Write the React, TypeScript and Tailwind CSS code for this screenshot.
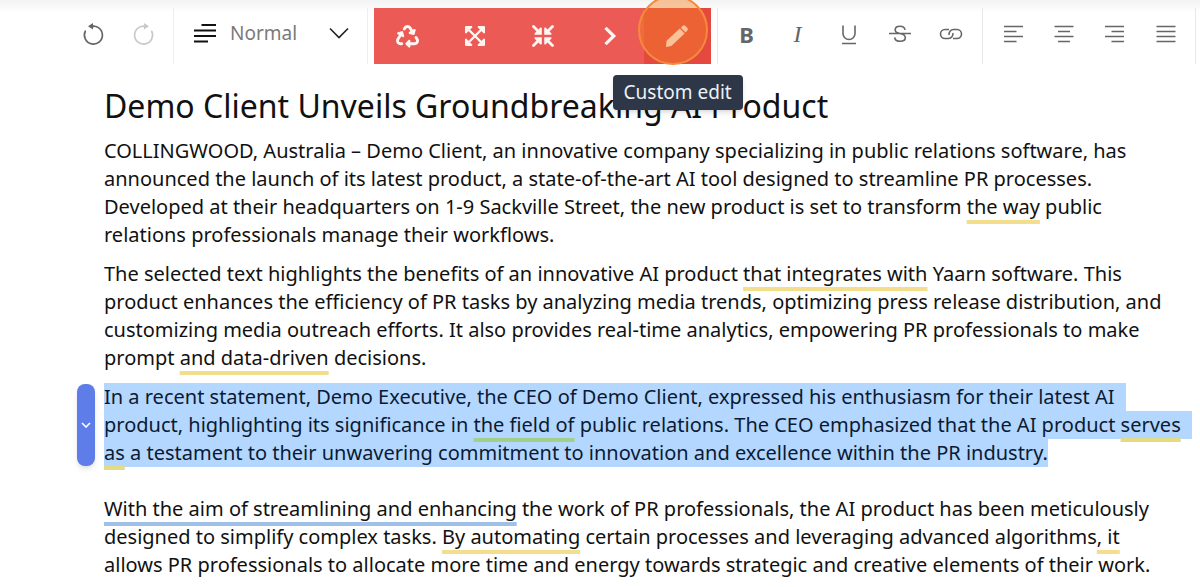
import type { ReactNode } from "react";
import { FaRecycle } from "react-icons/fa6";

function ToolButton({ label, children, faded = false }: { label: string; children: ReactNode; faded?: boolean }) {
  return (
    <button
      type="button"
      aria-label={label}
      disabled={faded}
      className={`flex h-14 w-[51px] items-center justify-center pb-1 ${faded ? "text-[#c9c9c9]" : "text-[#666]"}`}
    >
      {children}
    </button>
  );
}

function AiButton({ label, children }: { label: string; children: ReactNode }) {
  return (
    <button type="button" aria-label={label} className="flex h-14 flex-1 items-center justify-center">
      {children}
    </button>
  );
}

function RotateIcon() {
  return (
    <svg viewBox="0 0 24 24" className="size-6" fill="none" stroke="currentColor" strokeWidth="1.7">
      <path d="M9.500 4.600A9 9 0 1 1 4.300 9.200" strokeLinecap="round" />
      <path d="M12 1v6.600L7 4.300z" fill="currentColor" stroke="none" />
      <path d="M11 4.300h2" />
    </svg>
  );
}

function ExpandIcon() {
  return (
    <svg viewBox="0 0 20 20" className="size-5" fill="currentColor">
      <path d="M4 4L16 16M16 4L4 16" stroke="currentColor" strokeWidth="2.4" />
      <path d="M0 1a1 1 0 0 1 1-1H7L7.400 1.200L1.200 7.400L0 7zM20 1a1 1 0 0 0-1-1H13L12.600 1.200L18.800 7.400L20 7zM0 19a1 1 0 0 0 1 1H7L7.400 18.800L1.200 12.600L0 13zM20 19a1 1 0 0 1-1 1H13L12.600 18.800L18.800 12.600L20 13z" />
    </svg>
  );
}

function ShortenIcon() {
  return (
    <svg viewBox="0 0 22 22" className="size-[22px]" fill="currentColor">
      <path d="M1.500 1.500L7 7M20.500 1.500L15 7M1.500 20.500L7 15M20.500 20.500L15 15" stroke="currentColor" strokeWidth="2.800" strokeLinecap="round" />
      <path d="M9.800 2.800V9.800H2.600L2.500 8.400L8.400 2.500zM12.200 2.800V9.800H19.400L19.500 8.400L13.600 2.500zM9.800 19.200V12.200H2.600L2.500 13.600L8.400 19.500zM12.200 19.200V12.200H19.400L19.500 13.600L13.600 19.500z" />
    </svg>
  );
}

function PencilIcon() {
  return (
    <svg viewBox="0 0 24 24" className="size-6" fill="currentColor">
      <path d="M1 22.600L1.600 16.800L14.800 4.600L19.600 9.400L6.600 21.800L1.400 23z" />
      <path d="M15.800 3.700L17.600 1.900Q19 0.600 20.400 1.900L22.400 3.900Q23.600 5.300 22.300 6.600L20.600 8.400z" />
    </svg>
  );
}

function Lines({ d }: { d: string }) {
  return (
    <svg viewBox="0 0 20 20" className="size-5" fill="none" stroke="currentColor" strokeWidth="1.6">
      <path d={d} />
    </svg>
  );
}

function Hint({ tone = "yellow", children }: { tone?: "yellow" | "blue" | "green" | "olive"; children: ReactNode }) {
  const tones = {
    yellow: "decoration-[#f3de8d]",
    blue: "decoration-[#9fc0e8]",
    green: "decoration-[#a3cf8c]",
    olive: "decoration-[#e3db85]",
  };
  return (
    <span className={`underline decoration-4 underline-offset-[6px] [text-decoration-skip-ink:none] ${tones[tone]}`}>
      {children}
    </span>
  );
}

function Line({ children }: { children: ReactNode }) {
  return <span className="block whitespace-nowrap">{children}</span>;
}

function Selected({ children, open = false }: { children: ReactNode; open?: boolean }) {
  return (
    <span className={`block w-fit whitespace-nowrap bg-[#b3d7ff] text-[#0b1a33] ${open ? "pr-[11px]" : ""}`}>
      {children}
    </span>
  );
}

export default function App() {
  return (
    <div className="overflow-x-hidden bg-white font-['Noto_Sans',sans-serif] text-[#111]">
      <header className="bg-linear-to-b from-[#f3f3f3] to-white to-20% pt-2">
        <div role="toolbar" aria-label="Formatting" className="flex h-14 pl-[67px]">
          <div className="flex border-r border-[#eee] pr-1">
            <ToolButton label="Undo">
              <RotateIcon />
            </ToolButton>
            <ToolButton label="Redo" faded>
              <span className="-scale-x-100">
                <RotateIcon />
              </span>
            </ToolButton>
          </div>

          <div className="flex w-[194px] shrink-0 items-center border-r border-[#eee] pb-1.5 pl-5 pr-[18px]">
            <svg viewBox="0 0 22 20" className="h-5 w-[22px] shrink-0" fill="none" stroke="#111" strokeWidth="2">
              <path d="M7.500 2H22M0 7.500H22M0 13H22M0 18.500H14" />
            </svg>
            <select
              aria-label="Paragraph style"
              defaultValue="normal"
              className="ml-[14px] min-w-0 flex-1 appearance-none bg-transparent text-[19px] text-[#7a7a7a] outline-none"
            >
              <option value="normal">Normal</option>
            </select>
            <svg viewBox="0 0 20 12" className="h-3 w-5 shrink-0" fill="none" stroke="#222" strokeWidth="1.6">
              <path d="M1 1.500L10 10.500L19 1.500" />
            </svg>
          </div>

          <div className="ml-[6px] flex w-[337px] shrink-0 bg-[#eb5a55] text-[#fff6f2]">
            <AiButton label="Rephrase">
              <FaRecycle className="size-[23px]" />
            </AiButton>
            <AiButton label="Expand">
              <ExpandIcon />
            </AiButton>
            <AiButton label="Shorten">
              <ShortenIcon />
            </AiButton>
            <AiButton label="Continue">
              <svg viewBox="0 0 14 20" className="h-5 w-[14px]" fill="none" stroke="currentColor" strokeWidth="3.200">
                <path d="M2.500 1.800L10.800 10L2.500 18.200" />
              </svg>
            </AiButton>
            <div className="relative flex flex-1 bg-[#e5483f]">
              <button
                type="button"
                aria-label="Custom edit"
                aria-describedby="custom-edit-tip"
                className="flex flex-1 items-center justify-center"
              >
                <PencilIcon />
              </button>
              <span className="pointer-events-none absolute -left-[6px] -top-[13px] size-[70px] rounded-full border-2 border-[#f58a3c] bg-[#f5822a]/45" />
              <span
                id="custom-edit-tip"
                role="tooltip"
                className="absolute -left-[31px] top-[67px] z-10 flex h-[35px] w-[130px] items-center justify-center whitespace-nowrap rounded-sm bg-[#2d3748] text-[19px] text-[#eef1f6] shadow-md"
              >
                Custom edit
              </span>
            </div>
          </div>

          <div className="ml-[6px] flex border-x border-[#e8e8e8] pl-[3px] pr-[6px]">
            <ToolButton label="Bold">
              <span className="text-[22px] font-bold">B</span>
            </ToolButton>
            <ToolButton label="Italic">
              <span className="font-['Liberation_Serif',serif] text-2xl italic">I</span>
            </ToolButton>
            <ToolButton label="Underline">
              <svg viewBox="0 0 20 22" className="h-[22px] w-5" fill="none" stroke="currentColor" strokeWidth="1.6">
                <path d="M4 2.500V10.500a6 6 0 0 0 12 0V2.500M3 20.500H17" />
              </svg>
            </ToolButton>
            <ToolButton label="Strikethrough">
              <svg viewBox="0 0 24 20" className="h-5 w-6" fill="none" stroke="currentColor" strokeWidth="1.6">
                <path d="M1 9.500H23M17 5.800C16.500 3.400 14.700 2.300 12 2.300C9.100 2.300 7.200 3.700 7.200 5.900C7.200 8 9 8.900 12 9.500C15.500 10.200 17.300 11.300 17.300 13.500C17.300 15.900 15.200 17.300 12.100 17.300C8.900 17.300 7 15.900 6.700 13.300" />
              </svg>
            </ToolButton>
            <ToolButton label="Link">
              <svg viewBox="0 0 24 14" className="h-[14px] w-6" fill="none" stroke="currentColor" strokeWidth="1.6">
                <path d="M10 2.500H6A4.500 4.500 0 0 0 6 11.500H9.500A4.500 4.500 0 0 0 13.800 6M14 11.500H18A4.500 4.500 0 0 0 18 2.500H14.500A4.500 4.500 0 0 0 10.200 8" />
              </svg>
            </ToolButton>
          </div>

          <div className="flex border-r border-[#e8e8e8] px-1">
            <ToolButton label="Align left">
              <Lines d="M1 2.500H20M1 7.500H13.500M1 12.500H20M1 17.500H13.500" />
            </ToolButton>
            <ToolButton label="Align center">
              <Lines d="M0.500 2.500H19.500M4 7.500H16M0.500 12.500H19.500M4 17.500H16" />
            </ToolButton>
            <ToolButton label="Align right">
              <Lines d="M0 2.500H19M6.500 7.500H19M0 12.500H19M6.500 17.500H19" />
            </ToolButton>
            <ToolButton label="Justify">
              <Lines d="M0.500 2.500H19.500M0.500 7.500H19.500M0.500 12.500H19.500M0.500 17.500H19.500" />
            </ToolButton>
          </div>
        </div>
      </header>

      <main className="pl-[104px] pt-5 text-xl leading-7">
        <h1 className="mb-[9px] whitespace-nowrap text-[32px] leading-[44px]">
          Demo Client Unveils Groundbreaking AI Product
        </h1>
        <p className="mb-[11px]">
          <Line>COLLINGWOOD, Australia – Demo Client, an innovative company specializing in public relations software, has</Line>
          <Line>announced the launch of its latest product, a state-of-the-art AI tool designed to streamline PR processes.</Line>
          <Line>
            Developed at their headquarters on 1-9 Sackville Street, the new product is set to transform <Hint>the way</Hint> public
          </Line>
          <Line>relations professionals manage their workflows.</Line>
        </p>
        <p className="mb-[11px]">
          <Line>
            The selected text highlights the benefits of an innovative AI product <Hint>that integrates with</Hint> Yaarn software. This
          </Line>
          <Line>product enhances the efficiency of PR tasks by analyzing media trends, optimizing press release distribution, and</Line>
          <Line>customizing media outreach efforts. It also provides real-time analytics, empowering PR professionals to make</Line>
          <Line>
            prompt <Hint>and data-driven</Hint> decisions.
          </Line>
        </p>
        <div className="relative mb-7">
          <button
            type="button"
            aria-label="Paragraph actions"
            className="absolute -left-[27px] top-px flex h-[82px] w-[18px] items-center justify-center rounded-lg bg-[#5f7de8] shadow-md"
          >
            <svg viewBox="0 0 10 6" className="h-[6px] w-[10px]" fill="none" stroke="white" strokeWidth="1.6">
              <path d="M1 1L5 5L9 1" />
            </svg>
          </button>
          <p>
            <Selected open>In a recent statement, Demo Executive, the CEO of Demo Client, expressed his enthusiasm for their latest AI</Selected>
            <Selected open>
              product, highlighting its significance in <Hint tone="green">the field of</Hint> public relations. The CEO emphasized that the AI product{" "}
              <Hint tone="olive">serves</Hint>
            </Selected>
            <Selected>
              <Hint tone="olive">as</Hint> a testament to their unwavering commitment to innovation and excellence within the PR industry.
            </Selected>
          </p>
        </div>
        <p>
          <Line>
            <Hint tone="blue">With the aim of streamlining and enhancing</Hint> the work of PR professionals, the AI product has been meticulously
          </Line>
          <Line>
            designed to simplify complex tasks. <Hint>By automating</Hint> certain processes and leveraging advanced algorithms<Hint>, it</Hint>
          </Line>
          <Line>allows PR professionals to allocate more time and energy towards strategic and creative elements of their work.</Line>
        </p>
      </main>
    </div>
  );
}
